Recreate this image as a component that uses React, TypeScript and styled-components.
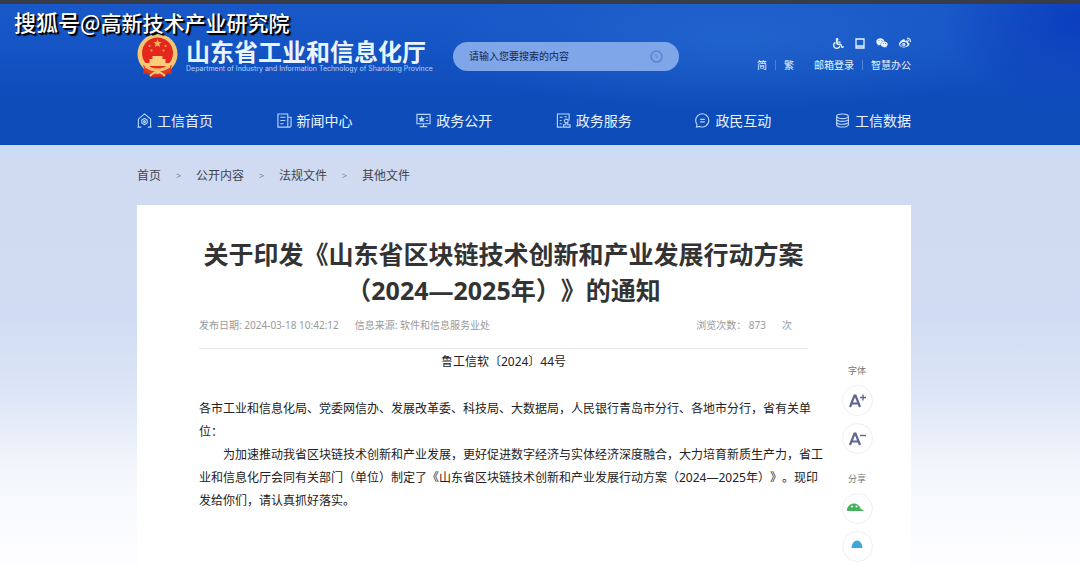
import React from "react";
import styled, { createGlobalStyle } from "styled-components";
import { FaWheelchair, FaWeixin, FaWeibo } from "react-icons/fa";

const GlobalStyle = createGlobalStyle`
  * { box-sizing: border-box; }
  body {
    margin: 0;
    background: #fdfdff;
    font-family: "Noto Sans", "Noto Sans CJK SC", sans-serif;
    text-spacing-trim: space-all;
    overflow-x: hidden;
  }
  a { color: inherit; text-decoration: none; }
  button { font: inherit; cursor: pointer; }
`;

const Page = styled.div`
  min-height: 100vh;
  display: flex;
  flex-direction: column;
  background: linear-gradient(#cbdcf6 145px, #d0dbf2 160px, #d0dcf3 320px, #dee7f7 400px, #f3f6fc 470px, #fdfdff 550px);
`;

const Header = styled.header`
  border-top: 4px solid #383c48;
  padding: 0 169px 0 137px;
  color: #e8f4ff;
  background:
    radial-gradient(ellipse 140px 90px at 100% 10%, rgba(6, 52, 186, 0.7), transparent),
    radial-gradient(ellipse 300px 70px at 68% 25%, rgba(40, 108, 210, 0.6), transparent),
    linear-gradient(#1958c8, #1554c4 40px, #0f4dbb 90px, #0c4ab8);
`;

const Watermark = styled.div`
  position: absolute;
  top: 6px;
  left: 14px;
  font-size: 21px;
  line-height: 30px;
  font-weight: 500;
  font-family: "Noto Sans CJK SC", sans-serif;
  color: #fff;
  text-shadow: 1px 1px 1px #000, 2px 2px 1px #000;
  white-space: nowrap;
`;

const WatermarkSite = styled.span`
  font-size: 22px;
`;

const TopRow = styled.div`
  display: flex;
  align-items: center;
  height: 94px;
  padding-top: 10px;
`;

const Brand = styled.a`
  display: flex;
  align-items: center;
  gap: 8px;
  flex: none;
`;

const BrandText = styled.span`
  display: flex;
  flex-direction: column;
  width: 243px;
`;

const BrandName = styled.strong`
  font-size: 24px;
  line-height: 26px;
  font-weight: 700;
  white-space: nowrap;
`;

const BrandSub = styled.span`
  font-family: Inter, sans-serif;
  font-size: 7px;
  line-height: 8px;
  color: #b5d2fa;
  white-space: nowrap;
`;

const Search = styled.form`
  display: flex;
  align-items: center;
  width: 226px;
  height: 29px;
  margin-left: 24px;
  padding: 0 16px;
  border-radius: 15px;
  background: #7ea6e8;
`;

const SearchInput = styled.input`
  flex: 1;
  min-width: 0;
  padding: 0;
  border: 0;
  outline: 0;
  background: transparent;
  font: inherit;
  font-size: 10px;
  color: #14264f;
  &::placeholder { color: #14264f; opacity: 1; }
`;

const SearchButton = styled.button`
  display: flex;
  padding: 0;
  border: 0;
  background: transparent;
  color: #5b86d2;
`;

const Utilities = styled.div`
  display: flex;
  flex-direction: column;
  align-items: flex-end;
  gap: 8px;
  margin-left: auto;
  padding-bottom: 2px;
`;

const Social = styled.div`
  display: flex;
  align-items: center;
  gap: 11px;
  height: 12px;
`;

const Links = styled.div`
  display: flex;
  align-items: center;
  font-size: 10px;
  line-height: 16px;
  white-space: nowrap;
`;

const Divider = styled.i`
  width: 1px;
  height: 10px;
  margin: 0 8px;
  background: #4d80d8;
`;

const Spacer = styled.span`
  width: 20px;
`;

const Nav = styled.nav`
  display: flex;
  justify-content: space-between;
  align-items: center;
  height: 47px;
  padding-bottom: 2px;
`;

const NavLink = styled.a`
  display: flex;
  align-items: center;
  gap: 5px;
  font-size: 14px;
  line-height: 20px;
  white-space: nowrap;
  svg { color: #b9d6fb; }
`;

const Main = styled.main`
  flex: 1;
  display: flex;
  flex-direction: column;
  padding: 0 169px 0 137px;
`;

const Crumbs = styled.nav`
  display: flex;
  align-items: center;
  height: 60px;
  font-size: 12px;
  color: #3f4550;
`;

const CrumbArrow = styled.span`
  width: 35px;
  text-align: center;
  font-size: 9px;
  color: #7c8494;
`;

const Card = styled.div`
  flex: 1;
  display: flex;
  background: #fff;
`;

const Article = styled.article`
  flex: 1;
  min-width: 0;
  padding: 31px 0 40px 62px;
`;

const Title = styled.h1`
  margin: 0;
  font-size: 25px;
  line-height: 36px;
  font-weight: 700;
  text-align: center;
  color: #333;
`;

const Meta = styled.div`
  display: flex;
  gap: 16px;
  padding: 9px 16px 15px 0;
  border-bottom: 1px solid #e6e6e6;
  font-size: 10px;
  line-height: 16px;
  color: #999;
`;

const Views = styled.span`
  display: flex;
  gap: 16px;
  margin-left: auto;
`;

const Body = styled.div`
  margin-right: -16px;
  padding-top: 1px;
  font-size: 12px;
  line-height: 23px;
  color: #222;
`;

const DocNumber = styled.p`
  margin: 0 16px 24px 0;
  text-align: center;
`;

const Paragraph = styled.p<{ $indent?: boolean }>`
  margin: 0;
  text-indent: ${(p) => (p.$indent ? "2em" : "0")};
`;

const Tools = styled.aside`
  flex: none;
  display: flex;
  flex-direction: column;
  align-items: center;
  gap: 7px;
  width: 103px;
  padding: 158px 5px 4px 0;
`;

const ToolLabel = styled.span<{ $next?: boolean }>`
  margin-top: ${(p) => (p.$next ? "10px" : "0")};
  font-size: 9px;
  line-height: 15px;
  color: #777;
`;

const ToolButton = styled.button`
  display: flex;
  align-items: center;
  justify-content: center;
  width: 31px;
  height: 31px;
  padding: 0;
  border: 1px solid #efeff3;
  border-radius: 50%;
  background: #fff;
  color: #5d6590;
`;

const Emblem = () => (
  <svg width="41" height="44" viewBox="0 0 41 44" aria-hidden="true">
    <path d="M7 28 L6 40 L11 40 L14 43 L27 43 L30 40 L35 40 L34 28Z" fill="#d92a22" />
    <circle cx="20.500" cy="20" r="20" fill="#f3c772" />
    <circle cx="20.500" cy="19" r="15.500" fill="#e5281e" />
    <path d="M20.500 5l1.100 2.900 3.100.2-2.400 2 .8 3-2.600-1.700-2.600 1.700.8-3-2.400-2 3.100-.2z" fill="#f8b45c" />
    <g fill="#f2a850">
      <circle cx="12.500" cy="12" r="1.100" /><circle cx="14.500" cy="16.500" r="1.100" />
      <circle cx="28.500" cy="12" r="1.100" /><circle cx="26.500" cy="16.500" r="1.100" />
    </g>
    <path d="M15.500 22h10v3h3v4h5l-2 3h-22l-2-3h5v-4h3z" fill="#f8cf78" />
    <path d="M6 31q14.500 9 29 0l-2 7q-12.500 6-25 0z" fill="#df3a25" />
    <path d="M8 32.500q6 4 12.500 4t12.500-4M13 42q7.500-8 15 0" fill="none" stroke="#f3c772" strokeWidth="2" />
    <circle cx="20.500" cy="37.500" r="2.500" fill="#f3c772" />
  </svg>
);

const Line = ({ children }: { children: React.ReactNode }) => (
  <svg width="15" height="15" viewBox="0 0 16 16" fill="none" stroke="currentColor" strokeWidth="1.200" aria-hidden="true">
    {children}
  </svg>
);

const navItems = [
  {
    label: "工信首页",
    icon: <Line><path d="M1.500 6.500 8 1l6.500 5.500V15M1.500 6.500V15M.5 15h4M11.500 15h4" /><path d="M8 5.800l2.900 1.700v3.200L8 12.300l-2.900-1.600V7.500z" /><circle cx="8" cy="9" r="1" /></Line>,
  },
  {
    label: "新闻中心",
    icon: <Line><path d="M1 1h10.500v14H1zM11.500 4.500H15V13.500q0 1.500-1.500 1.500h-3M3.500 4.500H9M3.500 8H9M3.500 11.500H7" /></Line>,
  },
  {
    label: "政务公开",
    icon: <Line><path d="M1 1.500h14v10H1zM4 14.500h8M8 11.500v3M10.500 5H13M10.500 8H13" /><path d="M6 3l1.100 2.300 2.500.3-1.800 1.700.5 2.500L6 8.600 3.700 9.800l.5-2.500-1.800-1.700 2.500-.3z" fill="currentColor" strokeWidth="0" /></Line>,
  },
  {
    label: "政务服务",
    icon: <Line><path d="M7 15H1.500V1H14v7M4 4.500h3M4 8h2M4 11.500h2M9 4h2.500" /><circle cx="11" cy="8.500" r="2" /><path d="M10.500 10.500v2H8V15h7v-2.500h-2.500v-2" /></Line>,
  },
  {
    label: "政民互动",
    icon: <Line><path d="M1.500 15l.6-3A7 7 0 1 1 5 14.300zM5.500 6.800h5M5.500 9.500h5" /></Line>,
  },
  {
    label: "工信数据",
    icon: <Line><ellipse cx="8" cy="3.500" rx="6.300" ry="2.500" /><path d="M1.700 3.500v9c0 3.300 12.600 3.300 12.600 0v-9M1.700 6.500c0 3.300 12.600 3.300 12.600 0M1.700 9.500c0 3.300 12.600 3.300 12.600 0" /></Line>,
  },
];

const crumbs = ["首页", "公开内容", "法规文件", "其他文件"];

const FontIcon = ({ plus }: { plus?: boolean }) => (
  <svg width="19" height="16" viewBox="0 0 19 16" fill="none" stroke="currentColor" aria-hidden="true">
    <path d="M2 14 6.500 2.500h1L12 14M3.700 10.500h6.600" strokeWidth="2.200" />
    <path d={plus ? "M12 4.500h6M15 1.500v6" : "M12 4.500h6"} strokeWidth="1.400" />
  </svg>
);

export default function App() {
  return (
    <Page>
      <GlobalStyle />
      <Header>
        <Watermark><WatermarkSite>搜狐号</WatermarkSite>@高新技术产业研究院</Watermark>
        <TopRow>
          <Brand href="#">
            <Emblem />
            <BrandText>
              <BrandName>山东省工业和信息化厅</BrandName>
              <BrandSub>Department of Industry and Information Technology of Shandong Province</BrandSub>
            </BrandText>
          </Brand>
          <Search>
            <SearchInput aria-label="搜索" placeholder="请输入您要搜索的内容" />
            <SearchButton type="button" aria-label="搜索">
              <svg width="13" height="13" viewBox="0 0 13 13" fill="none" stroke="currentColor">
                <circle cx="6.500" cy="6.500" r="5.500" strokeWidth="1.600" />
                <path d="M6 4v2.500l2 1" />
              </svg>
            </SearchButton>
          </Search>
          <Utilities>
            <Social>
              <a href="#" aria-label="无障碍"><FaWheelchair size={11} display="block" /></a>
              <a href="#" aria-label="移动版">
                <svg width="10" height="11" viewBox="0 0 10 11" fill="none" stroke="currentColor" display="block">
                  <path d="M1 1h8v9H1zM1 8h8" strokeWidth="1.300" />
                </svg>
              </a>
              <a href="#" aria-label="微信"><FaWeixin size={12} display="block" /></a>
              <a href="#" aria-label="微博"><FaWeibo size={12} display="block" /></a>
            </Social>
            <Links>
              <a href="#">简</a><Divider /><a href="#">繁</a>
              <Spacer />
              <a href="#">邮箱登录</a><Divider /><a href="#">智慧办公</a>
            </Links>
          </Utilities>
        </TopRow>
        <Nav>
          {navItems.map((item) => (
            <NavLink href="#" key={item.label}>{item.icon}{item.label}</NavLink>
          ))}
        </Nav>
      </Header>
      <Main>
        <Crumbs aria-label="当前位置">
          {crumbs.map((name, i) => (
            <React.Fragment key={name}>
              {i > 0 && <CrumbArrow>&gt;</CrumbArrow>}
              <a href="#">{name}</a>
            </React.Fragment>
          ))}
        </Crumbs>
        <Card>
          <Article>
            <Title>关于印发《山东省区块链技术创新和产业发展行动方案（2024—2025年）》的通知</Title>
            <Meta>
              <span>发布日期: 2024-03-18 10:42:12</span>
              <span>信息来源: 软件和信息服务业处</span>
              <Views><span>浏览次数： 873</span><span>次</span></Views>
            </Meta>
            <Body>
              <DocNumber>鲁工信软〔2024〕44号</DocNumber>
              <Paragraph>各市工业和信息化局、党委网信办、发展改革委、科技局、大数据局，人民银行青岛市分行、各地市分行，省有关单位：</Paragraph>
              <Paragraph $indent>为加速推动我省区块链技术创新和产业发展，更好促进数字经济与实体经济深度融合，大力培育新质生产力，省工业和信息化厅会同有关部门（单位）制定了《山东省区块链技术创新和产业发展行动方案（2024—2025年）》。现印发给你们，请认真抓好落实。</Paragraph>
            </Body>
          </Article>
          <Tools>
            <ToolLabel>字体</ToolLabel>
            <ToolButton type="button" aria-label="放大字体"><FontIcon plus /></ToolButton>
            <ToolButton type="button" aria-label="缩小字体"><FontIcon /></ToolButton>
            <ToolLabel $next>分享</ToolLabel>
            <ToolButton type="button" aria-label="分享到微信">
              <svg width="20" height="16" viewBox="0 0 20 16">
                <path d="M0 9a7 7 0 0 1 13.800-1l3.200 1.500-1 .5H0z" fill="#45b35c" />
                <circle cx="5" cy="5.500" r="1" fill="#fff" /><circle cx="9.500" cy="5.500" r="1" fill="#fff" />
              </svg>
            </ToolButton>
            <ToolButton type="button" aria-label="分享到QQ">
              <svg width="14" height="16" viewBox="0 0 14 16">
                <path d="M1.500 9a5.500 7.500 0 0 1 11 0z" fill="#3fa6dc" />
              </svg>
            </ToolButton>
          </Tools>
        </Card>
      </Main>
    </Page>
  );
}
